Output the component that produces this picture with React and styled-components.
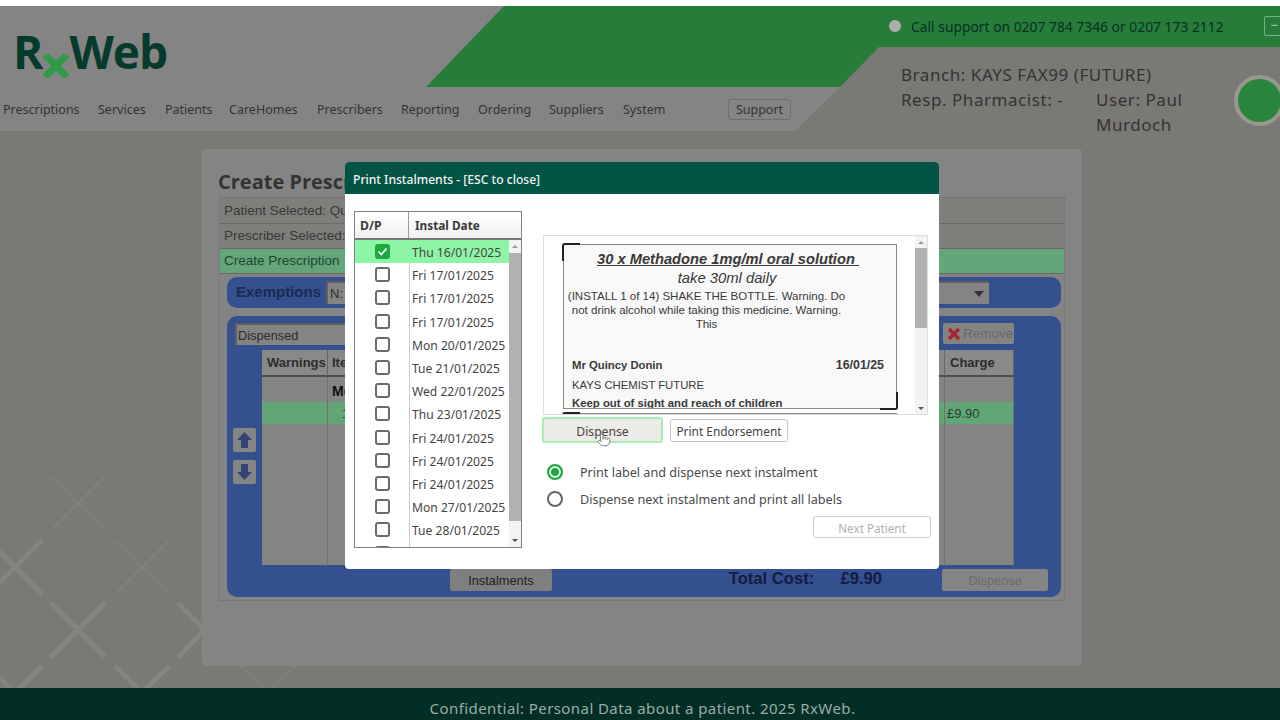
import React from "react";
import styled, { createGlobalStyle } from "styled-components";
import { Pointer } from "lucide-react";

const Global = createGlobalStyle`
  html, body { margin: 0; padding: 0; }
  body { font-family: "Noto Sans", sans-serif; background: #fff; }
  * { box-sizing: border-box; }
`;

const Page = styled.div`
  position: relative;
  width: 1280px;
  height: 720px;
  overflow: hidden;
  display: flex;
  flex-direction: column;
  background: #fff;
`;
const Header = styled.header`
  position: relative;
  margin-top: 6px;
  height: 125px;
  flex: none;
  display: flex;
  background: #7a7975;
  overflow: hidden;
`;
const HeaderShape = styled.svg`
  position: absolute;
  left: 0;
  top: 0;
`;
const HeaderLeft = styled.div`
  position: relative;
  width: 840px;
  flex: none;
`;
const Logo = styled.div`
  display: flex;
  align-items: flex-start;
  height: 93px;
  padding: 17px 0 0 13px;
  font: 700 46px/56px "Open Sans", sans-serif;
  color: #063a2c;
  letter-spacing: -1px;
`;
const LogoCross = styled.svg`
  margin: 31px -2px 0 -1px;
  flex: none;
`;
const Nav = styled.nav`
  display: flex;
  align-items: center;
  height: 21px;
  padding-left: 3px;
  font-size: 12.5px;
  color: #333;
`;
const NavItem = styled.span`
  width: ${(p) => p.$w}px;
  flex: none;
`;
const SupportButton = styled.span`
  margin-left: 63px;
  width: 63px;
  height: 21px;
  display: flex;
  align-items: center;
  justify-content: center;
  border: 1px solid #6e6e6e;
  border-radius: 3px;
  color: #333;
`;
const HeaderRight = styled.div`
  position: relative;
  flex: 1;
`;
const SupportLine = styled.div`
  display: flex;
  align-items: center;
  height: 40px;
  margin-bottom: 1px;
  padding-left: 49px;
  font-size: 13.85px;
  color: #06301f;
  white-space: nowrap;
`;
const Dot = styled.span`
  width: 12px;
  height: 12px;
  margin-right: 10px;
  border-radius: 50%;
  background: #aeaeae;
`;
const Minimize = styled.span`
  flex: none;
  margin-left: 40px;
  width: 26px;
  height: 20px;
  border: 1px solid #6fb583;
  border-radius: 2px;
  color: #9fcfab;
  line-height: 16px;
  padding-left: 6px;
`;
const InfoRow = styled.div`
  display: flex;
`;
const Info = styled.div`
  width: 394px;
  flex: none;
  padding: 15px 0 0 61px;
  font-size: 17px;
  line-height: 25px;
  letter-spacing: 0.55px;
  color: #333;
  display: grid;
  grid-template-columns: 195px 130px;
`;
const BranchLine = styled.div`
  grid-column: 1 / 3;
`;
const Avatar = styled.div`
  flex: none;
  margin-top: 28px;
  width: 51px;
  height: 51px;
  border-radius: 50%;
  background: #29843d;
  border: 4px solid #98988f;
`;

const Main = styled.main`
  position: relative;
  flex: 1;
  padding: 18px 0 0 202px;
  background: #7a7975;
  overflow: hidden;
`;
const Pattern = styled.svg`
  position: absolute;
  left: 0;
  top: 0;
`;
const Card = styled.section`
  position: relative;
  width: 880px;
  height: 517px;
  padding: 20px 17px 0;
  background: #848484;
  border-radius: 4px;
  color: #2d2d2d;
`;
const Title = styled.h1`
  margin: 0 0 0 -1px;
  height: 28px;
  font: 700 20px/26px "Open Sans", sans-serif;
  color: #333;
`;
const Frame = styled.div`
  height: 404px;
  border: 1px solid #777775;
  font-family: "Liberation Sans", sans-serif;
`;
const StatusRow = styled.div`
  height: ${(p) => p.$h}px;
  padding: 0 0 1px 4px;
  display: flex;
  align-items: center;
  font-size: 13.5px;
  color: ${(p) => (p.$ok ? "#1d4530" : "#383838")};
  background: ${(p) => (p.$ok ? "#64a67a" : "#7f7e7a")};
  border-bottom: 1px solid #6a6a64;
`;
const Exemptions = styled.div`
  margin: 3px 3px 0 7px;
  height: 31px;
  border-radius: 10px;
  background: #34508f;
  display: flex;
  align-items: center;
  padding: 0 0 2px 9px;
  font-size: 15px;
  font-weight: 700;
  color: #1c2a52;
`;
const ExemptSelect = styled.div`
  position: relative;
  margin: 2px 0 0 5px;
  width: 663px;
  height: 23px;
  border: 2px solid #5f5f5f;
  border-width: 2px 0 0 2px;
  background: #848484;
  font-size: 13px;
  font-weight: 400;
  color: #2d2d2d;
  padding: 3px 0 0 2px;
`;
const Caret = styled.span`
  position: absolute;
  right: 5px;
  top: 8px;
  border: 5px solid transparent;
  border-top: 6px solid #333;
  border-bottom: 0;
`;
const Panel = styled.div`
  margin: 8px 3px 0 7px;
  height: 281px;
  padding: 7px 13px 0 0;
  border-radius: 10px;
  background: #34508f;
`;
const PanelTop = styled.div`
  display: flex;
  justify-content: space-between;
  padding: 0 34px 0 8px;
`;
const DispensedSelect = styled.div`
  width: 400px;
  height: 22px;
  border: 2px solid #5f5f5f;
  border-width: 2px 0 0 2px;
  background: #848484;
  font-size: 12.8px;
  padding: 3px 0 0 1px;
  color: #2d2d2d;
`;
const RemoveButton = styled.div`
  width: 71px;
  height: 21px;
  display: flex;
  align-items: center;
  gap: 2px;
  padding-left: 4px;
  border-radius: 2px;
  background: #848484;
  color: #686868;
  font-size: 13.5px;
`;
const PanelMiddle = styled.div`
  display: flex;
  margin-top: 5px;
`;
const SideCol = styled.div`
  width: 35px;
  flex: none;
  padding: 78px 0 0 6px;
  display: flex;
  flex-direction: column;
  gap: 8px;
`;
const ArrowButton = styled.div`
  width: 23px;
  height: 24px;
  border-radius: 2px;
  background: #848484;
  display: flex;
  align-items: center;
  justify-content: center;
`;
const Table = styled.div`
  width: 752px;
  height: 215px;
  background: #848484;
  position: relative;
  display: grid;
  grid-template-columns: 66px 1fr 69px;
  grid-template-rows: 27px 1fr;
`;
const HeadCell = styled.div`
  display: flex;
  align-items: center;
  padding-left: ${(p) => p.$pad || 4}px;
  font-size: 13px;
  font-weight: 700;
  color: #2d2d2d;
  background: #898989;
  border-bottom: 2px solid #4d4d4d;
  border-right: 1px solid #666;
`;
const BodyCol = styled.div`
  border-right: 1px solid #707070;
  padding-top: 25px;
  font-size: 14px;
  font-weight: 400;
`;
const ColTitle = styled.div`
  height: 0;
  padding-left: 4px;
  font-weight: 700;
  font-size: 14px;
  color: #111;
  transform: translateY(-19px);
`;
const GreenCell = styled.div`
  height: 22px;
  background: #62a678;
  color: #20402b;
  display: flex;
  align-items: center;
  padding-left: ${(p) => p.$pad || 2}px;
  font-size: 13px;
`;
const PanelBottom = styled.div`
  display: flex;
  align-items: center;
  height: 22px;
  margin-top: 4px;
  padding-left: 223px;
`;
const GreyButton = styled.div`
  width: ${(p) => p.$w}px;
  height: 22px;
  display: flex;
  align-items: center;
  justify-content: center;
  border-radius: 2px;
  font-size: 12.8px;
  background: ${(p) => (p.$off ? "#848484" : "#7f7f7f")};
  color: ${(p) => (p.$off ? "#6b6b6b" : "#1e1e1e")};
`;
const Total = styled.div`
  margin: 0 0 2px 177px;
  width: 112px;
  font-size: 16.6px;
  font-weight: 700;
  color: #121c42;
`;
const TotalValue = styled.div`
  width: 102px;
  margin-bottom: 2px;
  font-size: 16.6px;
  font-weight: 700;
  color: #121c42;
`;
const Footer = styled.footer`
  flex: none;
  height: 32px;
  background: #022e26;
  display: flex;
  align-items: center;
  justify-content: center;
  padding: 7px 0 0 5px;
  font-size: 15px;
  letter-spacing: 0.42px;
  color: #9aada4;
`;

const Modal = styled.div`
  position: absolute;
  left: 345px;
  top: 162px;
  width: 594px;
  height: 407px;
  background: #fff;
  border-radius: 4px;
  overflow: hidden;
  color: #333;
`;
const ModalHeader = styled.div`
  height: 32px;
  background: #045445;
  color: #f3f3f3;
  font-size: 12.1px;
  font-weight: 500;
  display: flex;
  align-items: center;
  padding: 2px 0 0 8px;
`;
const ModalBody = styled.div`
  display: flex;
  padding: 17px 8px 0 9px;
  gap: 21px;
`;
const ListBox = styled.div`
  width: 168px;
  height: 337px;
  flex: none;
  border: 1px solid #808080;
  overflow: hidden;
  display: flex;
  flex-direction: column;
`;
const ListHead = styled.div`
  height: 28px;
  flex: none;
  display: flex;
  align-items: center;
  background: linear-gradient(#ffffff, #f1f1f1);
  border-bottom: 2px solid #777;
  font-size: 12.2px;
  font-weight: 700;
  color: #3a3a3a;
`;
const HeadDP = styled.div`
  width: 54px;
  height: 100%;
  padding-left: 5px;
  display: flex;
  align-items: center;
  border-right: 1px solid #999;
`;
const HeadDate = styled.div`
  padding-left: 6px;
  font-size: 11.8px;
`;
const ListMain = styled.div`
  flex: 1;
  display: flex;
  min-height: 0;
`;
const Rows = styled.div`
  flex: 1;
  overflow: hidden;
  background: linear-gradient(90deg, transparent 54px, #ccc 54px, #ccc 55px, transparent 55px);
`;
const Row = styled.div`
  height: 23.2px;
  display: flex;
  align-items: center;
  font-size: 12.1px;
  color: #444;
  background: ${(p) => (p.$active ? "#8ff5a6" : "transparent")};
`;
const CheckCell = styled.div`
  width: 55px;
  flex: none;
  display: flex;
  justify-content: center;
`;
const Check = styled.span`
  width: 15px;
  height: 15px;
  display: flex;
  align-items: center;
  justify-content: center;
  border-radius: 3px;
  border: 2px solid ${(p) => (p.$on ? "#1fa83f" : "#6b6b6b")};
  background: ${(p) => (p.$on ? "#1fa83f" : "#fff")};
`;
const DateText = styled.span`
  padding: 2px 0 0 2px;
  white-space: nowrap;
`;
const Scrollbar = styled.div`
  width: ${(p) => p.$w}px;
  flex: none;
  display: flex;
  flex-direction: column;
  background: #f3f3f3;
`;
const ScrollArrow = styled.div`
  height: ${(p) => p.$h}px;
  flex: none;
  display: flex;
  align-items: center;
  justify-content: center;
  &::after {
    content: "";
    border: 3px solid transparent;
    ${(p) => (p.$down ? "border-top: 3px solid #555; border-bottom: 0;" : "border-bottom: 3px solid #999; border-top: 0;")}
  }
`;
const Thumb = styled.div`
  height: ${(p) => p.$h}px;
  flex: none;
  background: #b2b2b2;
`;
const ScrollFill = styled.div`
  flex: 1;
`;
const RightCol = styled.div`
  flex: 1;
  padding-top: 24px;
  position: relative;
`;
const Preview = styled.div`
  height: 180px;
  width: 385px;
  border: 1px solid #ddd;
  display: flex;
`;
const Labels = styled.div`
  flex: 1;
  overflow: hidden;
  padding: 8px 0 0 19px;
`;
const Label = styled.div`
  position: relative;
  width: 334px;
  height: 165px;
  background: #f8f8f8;
  border: 1px solid #888;
  margin-bottom: 4px;
  font-family: "Liberation Sans", sans-serif;
  color: #3a3a3a;
`;
const LabelClip = styled.div`
  height: 163px;
  overflow: hidden;
  padding-top: 5px;
`;
const Bracket = styled.span`
  position: absolute;
  width: 18px;
  height: 18px;
  border: solid #222;
  ${(p) =>
    p.$end
      ? "right: -2px; bottom: -2px; border-width: 0 2px 2px 0; border-radius: 0 0 3px 0;"
      : "left: -2px; top: -2px; border-width: 2px 0 0 2px; border-radius: 3px 0 0 0;"}
`;
const DrugName = styled.div`
  text-align: center;
  font-size: 14.7px;
  line-height: 19px;
  font-weight: 700;
  font-style: italic;
  text-decoration: underline;
  white-space: pre;
  padding-right: 4px;
`;
const Directions = styled.div`
  text-align: center;
  font-size: 14.8px;
  line-height: 18px;
  font-style: italic;
  padding-right: 6px;
`;
const Warning = styled.div`
  width: 282px;
  margin-top: 2px;
  padding-left: 3px;
  text-align: center;
  font-size: 11.5px;
  line-height: 14px;
  white-space: nowrap;
`;
const NameLine = styled.div`
  display: flex;
  justify-content: space-between;
  align-items: flex-start;
  margin-top: 28px;
  padding: 0 12px 0 8px;
  font-size: 11.3px;
  font-weight: 700;
  height: 11.5px;
  line-height: 13px;
  overflow: hidden;
`;
const NameDate = styled.span`
  font-size: 12.4px;
`;
const PlainLine = styled.div`
  margin-top: 8px;
  padding-left: 8px;
  font-size: 11.3px;
  line-height: 13px;
`;
const BoldLine = styled.div`
  margin-top: 5px;
  padding-left: 8px;
  font-size: 11.35px;
  font-weight: 700;
  line-height: 13px;
`;
const ButtonRow = styled.div`
  display: flex;
  align-items: center;
  gap: 7px;
  margin: 2px 0 0 -1px;
`;
const DispenseButton = styled.div`
  width: 121px;
  height: 26px;
  display: flex;
  align-items: center;
  justify-content: center;
  padding-top: 2px;
  border: 2px solid #a6ecb6;
  border-radius: 3px;
  background: #ecebe7;
  font-size: 12.2px;
  color: #444;
`;
const EndorseButton = styled.div`
  width: 118px;
  height: 23px;
  display: flex;
  align-items: center;
  justify-content: center;
  padding-top: 2px;
  border: 1px solid #c4c4c4;
  border-radius: 3px;
  font-size: 11.9px;
  color: #444;
`;
const Hand = styled.span`
  position: absolute;
  left: 54px;
  top: 222px;
  color: #777;
  line-height: 0;
`;
const Options = styled.div`
  margin: 15px 0 0 4px;
`;
const Option = styled.div`
  height: 27px;
  display: flex;
  align-items: center;
  gap: 17px;
  font-size: 12.6px;
  color: #4a4a4a;
`;
const OptionText = styled.span`
  padding-top: 2px;
`;
const Radio = styled.span`
  width: 16px;
  height: 16px;
  flex: none;
  border-radius: 50%;
  border: 2px solid ${(p) => (p.$on ? "#1fa83f" : "#666")};
  background: ${(p) => (p.$on ? "#1fa83f" : "#fff")};
  box-shadow: ${(p) => (p.$on ? "inset 0 0 0 2px #fff" : "none")};
`;
const NextRow = styled.div`
  display: flex;
  justify-content: flex-end;
  margin-top: 4px;
  width: 388px;
`;
const NextButton = styled.div`
  width: 118px;
  height: 22px;
  display: flex;
  align-items: center;
  justify-content: center;
  padding-top: 1px;
  border: 1px solid #cfcfcf;
  border-radius: 3px;
  color: #b0b0b0;
  font-size: 11.7px;
`;

const navItems = [
  ["Prescriptions", 95],
  ["Services", 67],
  ["Patients", 64],
  ["CareHomes", 88],
  ["Prescribers", 84],
  ["Reporting", 77],
  ["Ordering", 71],
  ["Suppliers", 74],
  ["System", 42],
];
const dates = [
  "Thu 16/01/2025", "Fri 17/01/2025", "Fri 17/01/2025", "Fri 17/01/2025",
  "Mon 20/01/2025", "Tue 21/01/2025", "Wed 22/01/2025", "Thu 23/01/2025",
  "Fri 24/01/2025", "Fri 24/01/2025", "Fri 24/01/2025", "Mon 27/01/2025",
  "Tue 28/01/2025", "",
];
const thin = [[78, 503], [142, 567], [268, 693]];
const thick = [[15, 567], [78, 630], [205, 630], [15, 693], [142, 693]];
const crossPath = (x, y) => `M${x - 27} ${y - 27 - 131}L${x + 27} ${y + 27 - 131}M${x + 27} ${y - 27 - 131}L${x - 27} ${y + 27 - 131}`;

const Arrow = ({ up }) => (
  <svg width="17" height="18" viewBox="0 0 17 18">
    <path
      d={up ? "M8.5 1 L16 9 H12 V17 H5 V9 H1 Z" : "M8.5 17 L16 9 H12 V1 H5 V9 H1 Z"}
      fill="#33437a"
    />
  </svg>
);

export default function App() {
  return (
    <Page>
      <Global />
      <Header>
        <HeaderShape width="1280" height="125" viewBox="0 0 1280 125">
          <path d="M0 0H510L840 81L795 125H0Z" fill="#848484" />
          <path d="M504 0H1280V41H879L840 81H426Z" fill="#287c3a" />
        </HeaderShape>
        <HeaderLeft>
          <Logo>
            R
            <LogoCross width="30" height="24" viewBox="0 0 30 24">
              <path d="M4 1L26 23M26 1L4 23" stroke="#2f9a48" strokeWidth="7" />
            </LogoCross>
            Web
          </Logo>
          <Nav>
            {navItems.map(([t, w]) => (
              <NavItem key={t} $w={w}>{t}</NavItem>
            ))}
            <SupportButton>Support</SupportButton>
          </Nav>
        </HeaderLeft>
        <HeaderRight>
          <SupportLine>
            <Dot />
            Call support on 0207 784 7346 or 0207 173 2112
            <Minimize>−</Minimize>
          </SupportLine>
          <InfoRow>
            <Info>
              <BranchLine>Branch: KAYS FAX99 (FUTURE)</BranchLine>
              <div>Resp. Pharmacist: -</div>
              <div>User: Paul Murdoch</div>
            </Info>
            <Avatar />
          </InfoRow>
        </HeaderRight>
      </Header>

      <Main>
        <Pattern width="1280" height="560" viewBox="0 0 1280 560">
          {thin.map(([x, y]) => (
            <path key={x} d={crossPath(x, y)} stroke="#8a8985" strokeWidth="1" fill="none" />
          ))}
          {thick.map(([x, y]) => (
            <path key={x + "-" + y} d={crossPath(x, y)} stroke="#858480" strokeWidth="5" fill="none" />
          ))}
        </Pattern>
        <Card>
          <Title>Create Prescription</Title>
          <Frame>
            <StatusRow $h={26}>Patient Selected: Quincy Donin</StatusRow>
            <StatusRow $h={25}>Prescriber Selected: Dr Smith</StatusRow>
            <StatusRow $h={25} $ok>Create Prescription</StatusRow>
            <Exemptions>
              Exemptions
              <ExemptSelect>
                N:
                <Caret />
              </ExemptSelect>
            </Exemptions>
            <Panel>
              <PanelTop>
                <DispensedSelect>Dispensed</DispensedSelect>
                <RemoveButton>
                  <svg width="14" height="14" viewBox="0 0 14 14">
                    <path d="M2 2L12 12M12 2L2 12" stroke="#a8252b" strokeWidth="3.4" />
                  </svg>
                  Remove
                </RemoveButton>
              </PanelTop>
              <PanelMiddle>
                <SideCol>
                  <ArrowButton><Arrow up /></ArrowButton>
                  <ArrowButton><Arrow /></ArrowButton>
                </SideCol>
                <Table>
                  <HeadCell $pad={5}>Warnings</HeadCell>
                  <HeadCell>Items</HeadCell>
                  <HeadCell $pad={5}>Charge</HeadCell>
                  <BodyCol>
                    <GreenCell />
                  </BodyCol>
                  <BodyCol>
                    <ColTitle>Methadone</ColTitle>
                    <GreenCell $pad={14}>1</GreenCell>
                  </BodyCol>
                  <BodyCol>
                    <GreenCell>£9.90</GreenCell>
                  </BodyCol>
                </Table>
              </PanelMiddle>
              <PanelBottom>
                <GreyButton $w={102}>Instalments</GreyButton>
                <Total>Total Cost:</Total>
                <TotalValue>£9.90</TotalValue>
                <GreyButton $w={106} $off>Dispense</GreyButton>
              </PanelBottom>
            </Panel>
          </Frame>
        </Card>
      </Main>

      <Footer>Confidential: Personal Data about a patient. 2025 RxWeb.</Footer>

      <Modal>
        <ModalHeader>Print Instalments - [ESC to close]</ModalHeader>
        <ModalBody>
          <ListBox>
            <ListHead>
              <HeadDP>D/P</HeadDP>
              <HeadDate>Instal Date</HeadDate>
            </ListHead>
            <ListMain>
              <Rows>
                {dates.map((d, i) => (
                  <Row key={i} $active={i === 0}>
                    <CheckCell>
                      <Check $on={i === 0}>
                        {i === 0 && (
                          <svg width="11" height="11" viewBox="0 0 11 11">
                            <path d="M1.5 5.5L4.3 8.5L9.5 2.5" stroke="#fff" strokeWidth="1.6" fill="none" />
                          </svg>
                        )}
                      </Check>
                    </CheckCell>
                    <DateText>{d}</DateText>
                  </Row>
                ))}
              </Rows>
              <Scrollbar $w={12}>
                <ScrollArrow $h={13} />
                <Thumb $h={268} />
                <ScrollFill />
                <ScrollArrow $h={13} $down />
              </Scrollbar>
            </ListMain>
          </ListBox>
          <RightCol>
            <Preview>
              <Labels>
                <Label>
                  <Bracket />
                  <LabelClip>
                    <DrugName>{"30 x Methadone 1mg/ml oral solution "}</DrugName>
                    <Directions>take 30ml daily</Directions>
                    <Warning>
                      (INSTALL 1 of 14) SHAKE THE BOTTLE. Warning. Do
                      <br />
                      not drink alcohol while taking this medicine. Warning.
                      <br />
                      This
                    </Warning>
                    <NameLine>
                      <span>Mr Quincy Donin</span>
                      <NameDate>16/01/25</NameDate>
                    </NameLine>
                    <PlainLine>KAYS CHEMIST FUTURE</PlainLine>
                    <BoldLine>Keep out of sight and reach of children</BoldLine>
                  </LabelClip>
                  <Bracket $end />
                </Label>
                <Label>
                  <Bracket />
                </Label>
              </Labels>
              <Scrollbar $w={12}>
                <ScrollArrow $h={12} />
                <Thumb $h={80} />
                <ScrollFill />
                <ScrollArrow $h={12} $down />
              </Scrollbar>
            </Preview>
            <ButtonRow>
              <DispenseButton>Dispense</DispenseButton>
              <EndorseButton>Print Endorsement</EndorseButton>
            </ButtonRow>
            <Hand>
              <Pointer size={14} fill="#fff" strokeWidth={1.5} />
            </Hand>
            <Options>
              <Option>
                <Radio $on />
                <OptionText>Print label and dispense next instalment</OptionText>
              </Option>
              <Option>
                <Radio />
                <OptionText>Dispense next instalment and print all labels</OptionText>
              </Option>
            </Options>
            <NextRow>
              <NextButton>Next Patient</NextButton>
            </NextRow>
          </RightCol>
        </ModalBody>
      </Modal>
    </Page>
  );
}
